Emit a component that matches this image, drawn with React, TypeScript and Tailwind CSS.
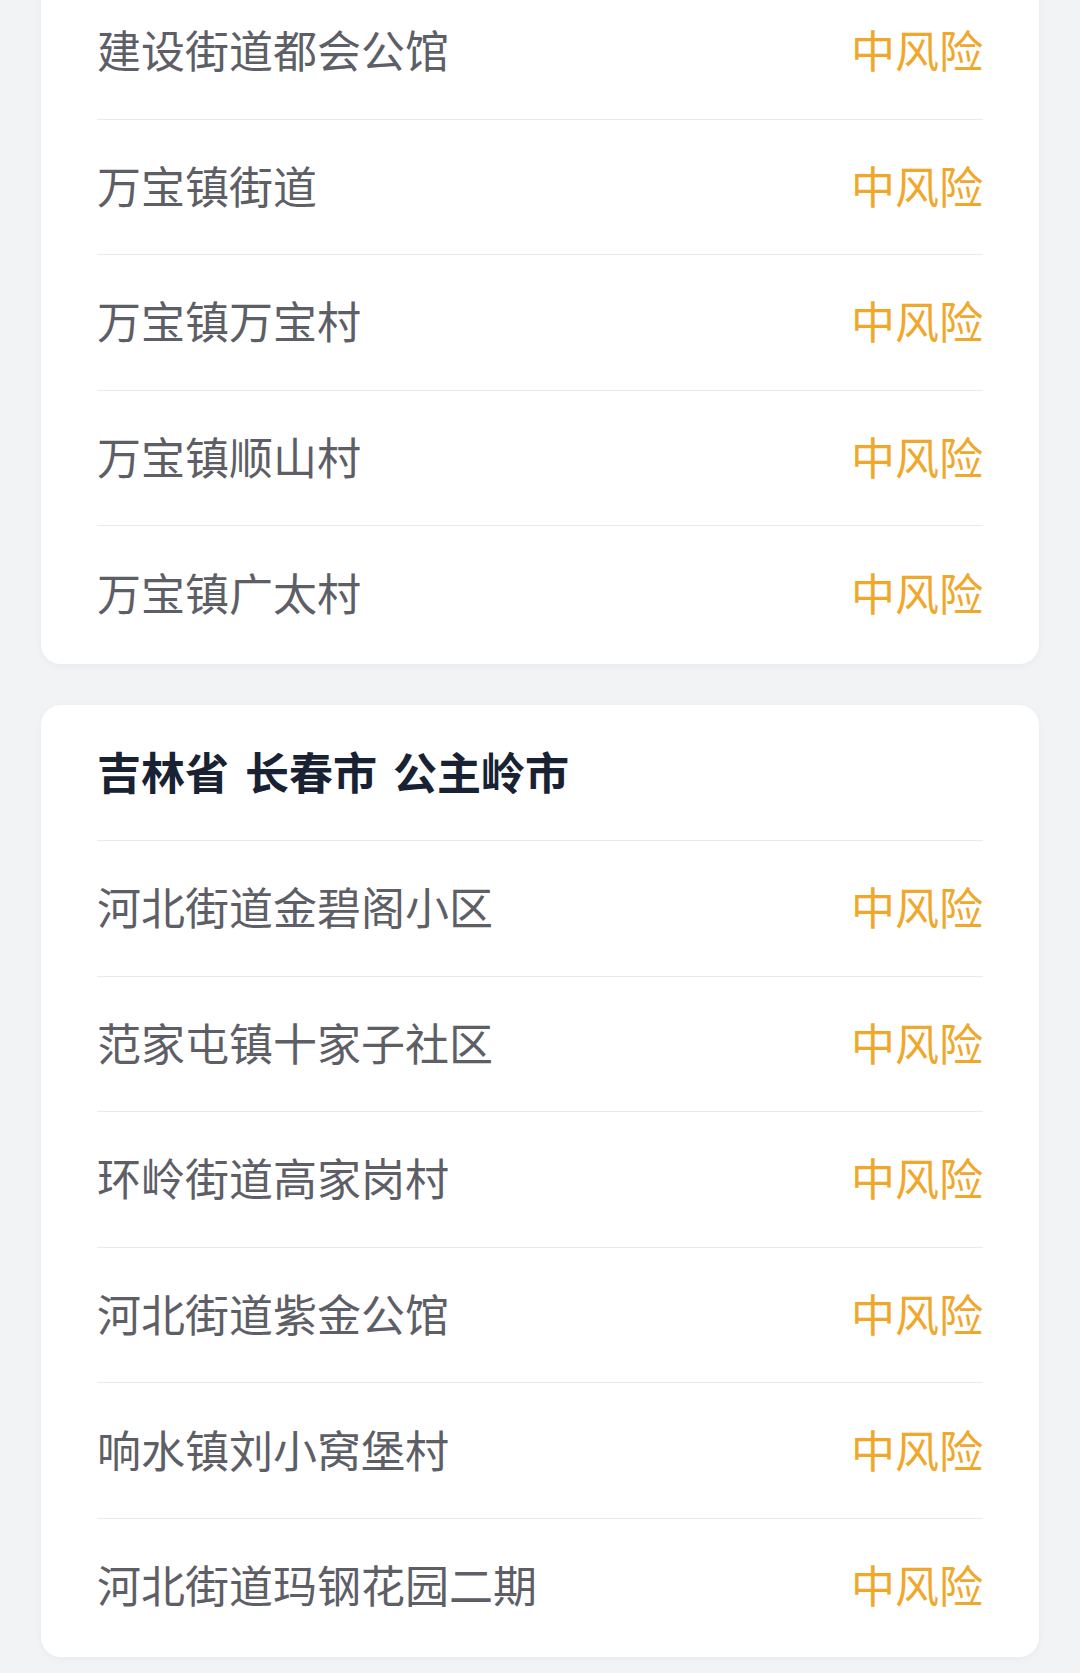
import React from "react";

const card1 = ["建设街道都会公馆", "万宝镇街道", "万宝镇万宝村", "万宝镇顺山村", "万宝镇广太村"];
const card2 = [
  "河北街道金碧阁小区",
  "范家屯镇十家子社区",
  "环岭街道高家岗村",
  "河北街道紫金公馆",
  "响水镇刘小窝堡村",
  "河北街道玛钢花园二期",
];

function Row({ name, first }: { name: string; first?: boolean }) {
  return (
    <div
      className={
        "flex h-[135.6px] items-center justify-between pb-[4px] " +
        (first ? "" : "border-t border-[#e9eaec]")
      }
    >
      <span className="text-[44px] leading-none text-[#5d5e66]">{name}</span>
      <span className="text-[44px] leading-none text-[#f0a82c]">中风险</span>
    </div>
  );
}

export default function App() {
  return (
    <div
      className="h-[1673px] overflow-hidden bg-[#f2f3f5] px-[41px]"
      style={{ fontFamily: '"Noto Sans CJK SC", "Noto Sans", sans-serif' }}
    >
      <div className="-mt-[17px] rounded-b-[20px] bg-white px-[56px] pb-[3px] shadow-[0_2px_8px_rgba(0,0,0,0.04)]">
        {card1.map((n, i) => (
          <Row key={n} name={n} first={i === 0} />
        ))}
      </div>
      <div className="mt-[41px] rounded-[20px] bg-white px-[56px] pb-[3px] shadow-[0_2px_8px_rgba(0,0,0,0.04)]">
        <div className="flex h-[135px] items-center gap-[16px] pb-[2px] text-[44px] font-bold leading-none text-[#182233]">
          <span>吉林省</span>
          <span>长春市</span>
          <span>公主岭市</span>
        </div>
        {card2.map((n) => (
          <Row key={n} name={n} />
        ))}
      </div>
    </div>
  );
}
